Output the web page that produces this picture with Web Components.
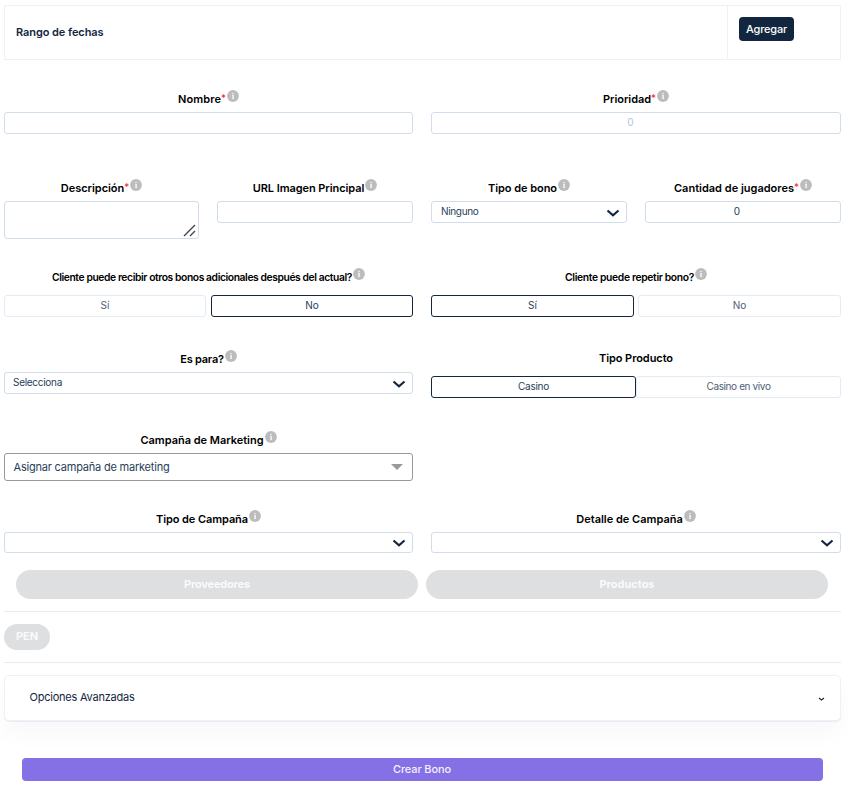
<!DOCTYPE html>
<html lang="es">
<head>
<meta charset="utf-8">
<title>Crear Bono</title>
<style>
body{margin:0;background:#fff;font-family:Inter,"Liberation Sans",sans-serif;color:#12263f}
</style>
</head>
<body>
<bono-form></bono-form>
<script>
const define=(name,html,setup)=>customElements.define(name,class extends HTMLElement{
  connectedCallback(){
    if(this.shadowRoot)return;
    this.attachShadow({mode:'open'}).innerHTML=html;
    if(setup)setup(this,this.shadowRoot);
  }
});

/* One line of text, tracked so that it fills the width given in "w". */
define('ui-text',`<style>:host{display:inline-block;white-space:nowrap;flex:none}span{display:inline-block}</style><span><slot></slot></span>`,(el,root)=>{
  const w=parseFloat(el.getAttribute('w'));
  if(!w)return;
  const span=root.querySelector('span'),n=el.textContent.length;
  const natural=span.getBoundingClientRect().width;
  const ls=(w-natural)/n;
  span.style.letterSpacing=ls.toFixed(3)+'px';
});

define('ui-info',`<style>:host{display:block;width:12px;height:12px;flex:none}svg{display:block}</style>
<svg width="12" height="12" viewBox="0 0 12 12"><circle cx="6" cy="6" r="5.9" fill="#bcbcbc"/><path d="M5.1 5.1h1.2v3.4M5 8.6h2.2" fill="none" stroke="#fff" stroke-opacity=".8" stroke-width=".7"/><path d="M6 5v3.6" stroke="#fff" stroke-width="1"/><circle cx="6" cy="3.4" r=".7" fill="#fff"/></svg>`);

define('ui-field',`<style>
:host{display:block;min-width:0}
.l{display:flex;justify-content:center;align-items:flex-start;height:var(--lh,22px);font-size:var(--fs,11px);font-weight:600;line-height:16px;color:#000}
.t{padding-top:var(--tp,1px);display:flex}
.s{color:#f22;width:5px;font-weight:400;font-size:10px;line-height:14px}
ui-info{margin-left:1px}
</style><div class="l"><span class="t"></span></div><slot></slot>`,(el,root)=>{
  const t=root.querySelector('.t');
  t.innerHTML=`<ui-text w="${el.getAttribute('w')}">${el.getAttribute('label')}</ui-text>`+(el.hasAttribute('required')?'<span class="s">*</span>':'');
  if(!el.hasAttribute('noinfo'))root.querySelector('.l').append(document.createElement('ui-info'));
});

define('ui-box',`<style>
:host{display:flex;box-sizing:border-box;height:var(--h,22px);border:1px solid #d2ddec;border-radius:3px;justify-content:center;font-size:10px;line-height:19px;color:#283e59;position:relative;background:#fff}
:host([soft]){border-color:#e3ebf6;color:#4d6078}
:host([active]){border-color:#12263f}
:host([muted]){color:#b1c2d9}
svg{position:absolute;right:2px;bottom:1px}
:host(:not([resize])) svg{display:none}
</style><slot></slot><svg width="13" height="13" viewBox="0 0 13 13"><path d="M1 12L12 1M7 12l5-5" stroke="#444" stroke-width="1.4"/></svg>`);

define('ui-select',`<style>
:host{display:flex;box-sizing:border-box;height:var(--h,22px);border:1px solid #d2ddec;border-radius:3px;justify-content:space-between;font-size:10px;line-height:19px;padding:0 6.5px 0 var(--pl,9px);color:#283e59}
:host([big]){border-color:#999;font-size:11px;line-height:27px;padding-right:9px}
.c{margin-top:var(--ct,6.5px)}.a{display:none;margin-top:10px}
:host([big]) .c{display:none}:host([big]) .a{display:block}
</style><span><slot></slot></span>
<svg class="c" width="14" height="9" viewBox="0 0 14 9"><path d="M1.5 1.5L7 6.3l5.5-4.8" fill="none" stroke="#12263f" stroke-width="2.2"/></svg>
<svg class="a" width="12" height="7" viewBox="0 0 12 7"><path d="M0 0h12L6 6z" fill="#999"/></svg>`);

define('ui-pill',`<style>:host{display:flex;justify-content:center;box-sizing:border-box;height:var(--h,29px);border-radius:15px;background:#dedfe1;color:#fafafa;font-size:11px;font-weight:700;line-height:28px}</style><slot></slot>`);

define('ui-button',`<style>:host{display:flex;justify-content:center;box-sizing:border-box;height:24px;border-radius:4px;background:#12263f;color:#fff;font-size:11px;font-weight:500;line-height:24px}
:host([primary]){height:23px;background:#8670e5;color:#f4f1ff;line-height:23px}</style><slot></slot>`);

define('ui-accordion',`<style>:host{display:flex;justify-content:space-between;box-sizing:border-box;height:46px;border:1px solid #edf2f9;border-radius:5px;box-shadow:0 12px 24px rgba(18,38,63,.03),0 1px 0 #edf2f9;padding:0 15px 0 24.5px;font-size:11px;line-height:42px;background:#fff}
svg{margin-top:20.5px}</style><span><slot></slot></span><svg width="7" height="5" viewBox="0 0 7 5"><path d="M1 1l2.5 2L6 1" fill="none" stroke="#12263f" stroke-width="1.1"/></svg>`);

define('bono-form',`<style>
:host{display:block;box-sizing:border-box;width:848px;height:792px;padding:5px 7px 0 4px;overflow:hidden}
.head{display:grid;grid-template-columns:722px 1fr;box-sizing:border-box;height:55px;border:1px solid #edf2f9}
.head>div{font-size:11px;font-weight:600}
.head .n{padding:18px 0 0 11px;line-height:16px}
.head .b{border-left:1px solid #edf2f9;padding:11px 0 0 11px}
.head ui-button{width:55px}
.row{display:grid;grid-template-columns:409px 410px;column-gap:18px;align-items:start}
.four{grid-template-columns:195px 196px 196px 196px}
.pair{display:grid;grid-template-columns:1fr 1fr;column-gap:var(--g,5px)}
hr{border:0;height:1px;margin:0;background:#e3ebf6}
.pills{display:grid;grid-template-columns:402px 402px;column-gap:8px;padding:17px 0 12px 12px}
</style>
<div class="head"><div class="n"><ui-text w="87.5">Rango de fechas</ui-text></div><div class="b"><ui-button><ui-text w="41">Agregar</ui-text></ui-button></div></div>
<div class="row" style="margin-top:30px">
<ui-field label="Nombre" w="43" required><ui-box></ui-box></ui-field>
<ui-field label="Prioridad" w="48" required><ui-box muted><ui-text style="margin-right:11px">0</ui-text></ui-box></ui-field>
</div>
<div class="row four" style="margin-top:45px">
<ui-field label="Descripción" w="63.5" required><ui-box resize style="--h:38px"></ui-box></ui-field>
<ui-field label="URL Imagen Principal" w="111.5"><ui-box></ui-box></ui-field>
<ui-field label="Tipo de bono" w="69"><ui-select><ui-text w="37.5">Ninguno</ui-text></ui-select></ui-field>
<ui-field label="Cantidad de jugadores" w="120" required><ui-box><ui-text style="margin-right:12px">0</ui-text></ui-box></ui-field>
</div>
<div class="row" style="margin-top:29px;--lh:27px;--fs:10.3px">
<ui-field label="Cliente puede recibir otros bonos adicionales después del actual?" w="300"><div class="pair"><ui-box soft><ui-text>Sí</ui-text></ui-box><ui-box active><ui-text>No</ui-text></ui-box></div></ui-field>
<ui-field label="Cliente puede repetir bono?" w="129"><div class="pair" style="--g:4px"><ui-box active><ui-text>Sí</ui-text></ui-box><ui-box soft><ui-text>No</ui-text></ui-box></div></ui-field>
</div>
<div class="row" style="margin-top:33px">
<ui-field label="Es para?" w="43.5"><ui-select style="--pl:8px"><ui-text w="49">Selecciona</ui-text></ui-select></ui-field>
<ui-field label="Tipo Producto" w="74" noinfo style="--lh:26px;--tp:0px"><div class="pair" style="--g:0px"><ui-box active><ui-text w="31">Casino</ui-text></ui-box><ui-box soft><ui-text w="64">Casino en vivo</ui-text></ui-box></div></ui-field>
</div>
<div class="row" style="margin-top:33px">
<ui-field label="Campaña de Marketing" w="123"><ui-select big style="--h:28px;--pl:8.5px"><ui-text w="156">Asignar campaña de marketing</ui-text></ui-select></ui-field>
</div>
<div class="row" style="margin-top:29px;--h:21px;--ct:5.5px">
<ui-field label="Tipo de Campaña" w="92"><ui-select></ui-select></ui-field>
<ui-field label="Detalle de Campaña" w="106.5"><ui-select></ui-select></ui-field>
</div>
<div class="pills"><ui-pill><ui-text w="66">Proveedores</ui-text></ui-pill><ui-pill><ui-text w="55">Productos</ui-text></ui-pill></div>
<hr>
<ui-pill style="--h:26px;width:46px;margin:12px 0;line-height:25px"><ui-text w="22">PEN</ui-text></ui-pill>
<hr>
<ui-accordion style="margin-top:12px"><ui-text w="105">Opciones Avanzadas</ui-text></ui-accordion>
<ui-button primary style="margin:37px 18px 0"><ui-text w="58" style="margin-right:1px">Crear Bono</ui-text></ui-button>
`);
</script>
</body>
</html>
